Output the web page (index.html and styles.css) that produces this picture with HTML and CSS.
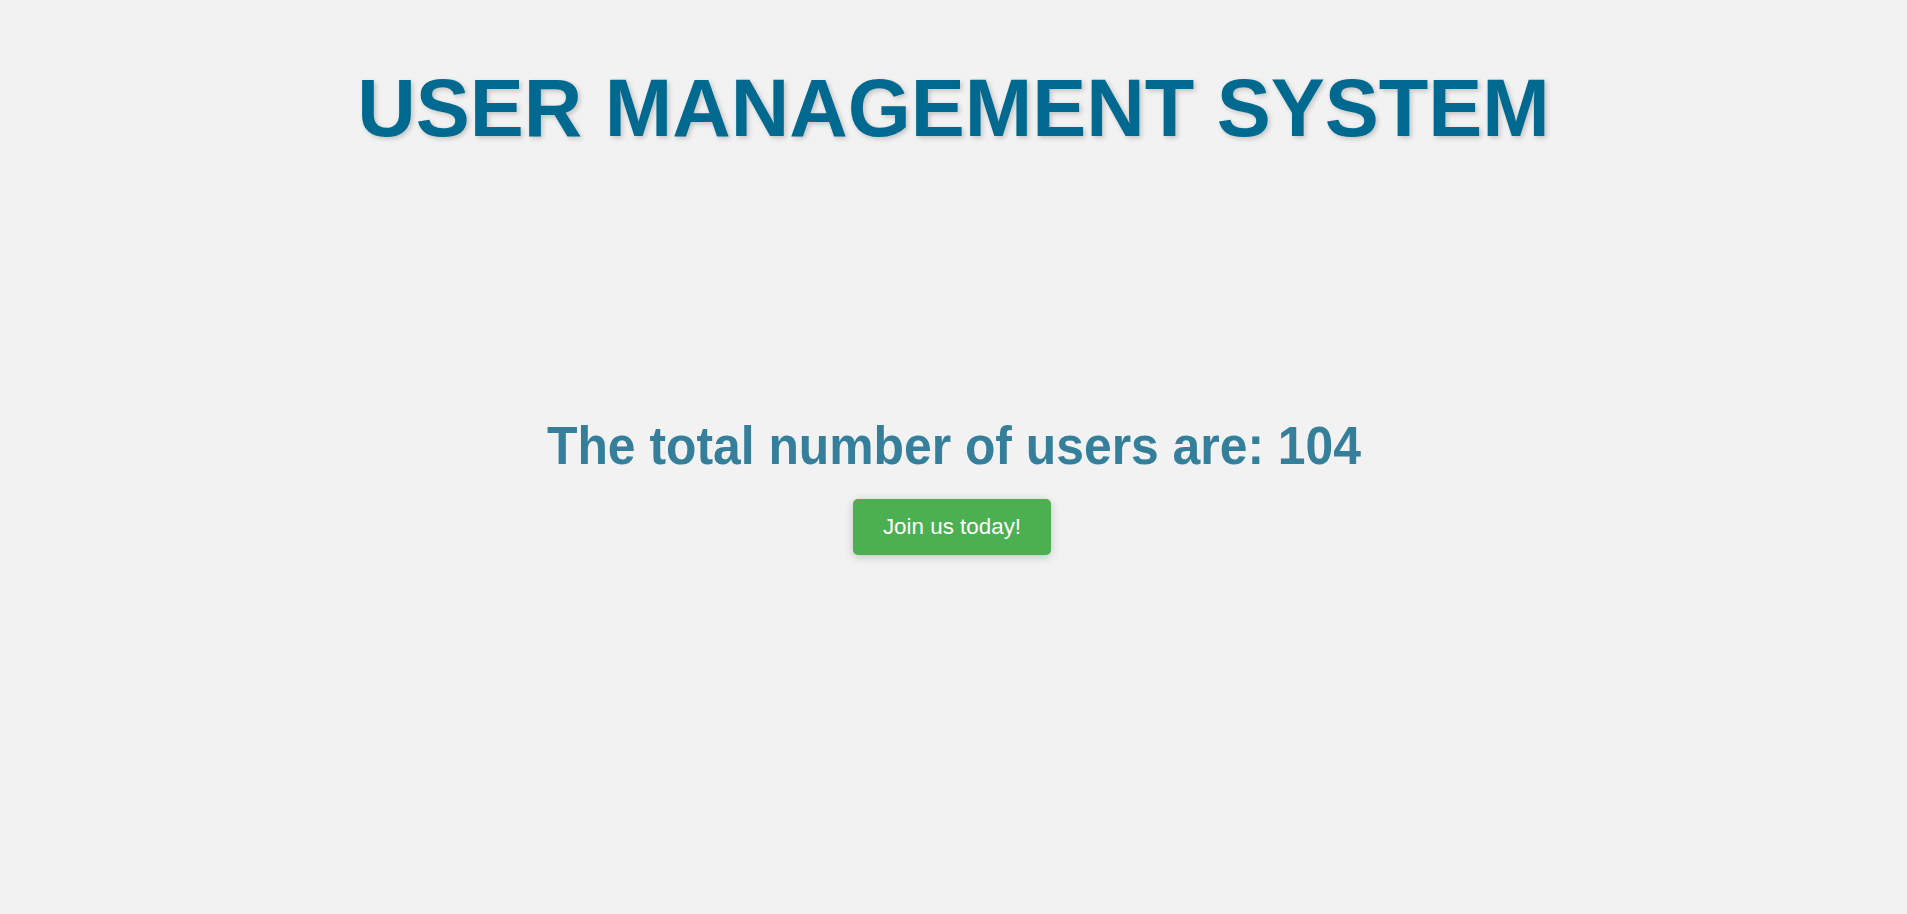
FILE: index.html
```html
<!DOCTYPE html>
<html lang="en">
<head>
<meta charset="utf-8">
<title>User Management System</title>
<link rel="stylesheet" href="styles.css">
</head>
<body>
  <header class="site-header">
    <h1 class="site-title">USER MANAGEMENT SYSTEM</h1>
  </header>
  <main class="hero">
    <h2 class="user-count"><span class="user-count-text">The total number of users are: 104</span></h2>
    <a class="join-btn" href="#">Join us today!</a>
  </main>
</body>
</html>
```

FILE: styles.css
```css
html, body {
  margin: 0;
  padding: 0;
}

body {
  background: #f2f2f2;
  font-family: "Liberation Sans", Arial, sans-serif;
  min-height: 914px;
}

.site-header {
  padding-top: 62px;
  text-align: center;
}

.site-title {
  margin: 0;
  font-size: 81px;
  line-height: 93px;
  font-weight: bold;
  color: #00698f;
  text-shadow: 2px 2px 5px rgba(0, 0, 0, 0.2);
}

.hero {
  padding-top: 260px;
  display: flex;
  flex-direction: column;
  align-items: center;
}

.user-count {
  margin: 0;
  font-size: 53px;
  line-height: 61px;
  font-weight: bold;
  color: #357f9b;
}

.user-count-text {
  display: inline-block;
  transform: scaleX(0.94);
}

.join-btn {
  margin-top: 23px;
  margin-right: 3px;
  display: inline-block;
  padding: 15px 30px;
  font-size: 22.4px;
  line-height: 26px;
  color: #ffffff;
  background: #4caf50;
  border-radius: 5px;
  text-decoration: none;
  box-shadow: 0 2px 10px rgba(0, 0, 0, 0.2);
}
```
